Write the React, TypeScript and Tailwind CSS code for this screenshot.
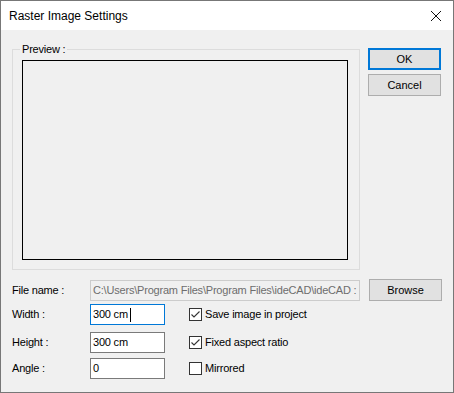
import React from "react";

const font = { fontFamily: '"Liberation Sans", Arial, sans-serif' };

function CheckBox({ checked, label }: { checked: boolean; label: string }) {
  return (
    <div className="flex items-center h-[21px]">
      <span className="w-[13px] h-[13px] border border-[#333333] bg-white flex items-center justify-center shrink-0">
        {checked && (
          <svg width="11" height="11" viewBox="0 0 11 11">
            <path d="M1.5 5.5 L4 8 L9.5 2.5" fill="none" stroke="#333333" strokeWidth="1.1" />
          </svg>
        )}
      </span>
      <span className="ml-[3px] text-[11px] tracking-[-0.2px] text-black leading-none">{label}</span>
    </div>
  );
}

function FormRow({
  label,
  value,
  focused,
  className = "",
  children,
}: {
  label: string;
  value: string;
  focused?: boolean;
  className?: string;
  children?: React.ReactNode;
}) {
  return (
    <div className={`flex items-center h-[21px] ${className}`}>
      <span className="w-[78px] text-[11px] tracking-[-0.2px] text-black leading-none">{label}</span>
      <div
        className={`w-[75px] h-[21px] bg-white flex items-center px-[2px] text-[11px] tracking-[-0.2px] text-black leading-none border ${
          focused ? "border-[#0078d7]" : "border-[#7a7a7a]"
        }`}
      >
        {value}
        {focused && <span className="inline-block w-[1px] h-[14px] bg-black ml-[2px]" />}
      </div>
      <div className="ml-[24px]">{children}</div>
    </div>
  );
}

export default function App() {
  return (
    <div className="w-[454px] h-[393px] border border-[#777777] flex flex-col bg-[#f0f0f0]" style={font}>
      <div className="h-[29px] bg-white flex items-center justify-between pl-[8px] pr-[11px] shrink-0">
        <span className="text-[12px] text-black">Raster Image Settings</span>
        <svg width="12" height="12" viewBox="0 0 12 12">
          <path d="M1 1 L11 11 M11 1 L1 11" stroke="#111111" strokeWidth="1" />
        </svg>
      </div>

      <div className="flex-1 pl-[11px]">
        <div className="flex items-start pt-[18px]">
          <div className="relative mt-[1px] w-[348px] h-[221px] border border-[#dcdcdc] pt-[10px] pl-[9px]">
            <span className="absolute left-[7px] top-[-8px] px-[2px] bg-[#f0f0f0] text-[11px] tracking-[-0.2px] leading-[14px] text-black">
              Preview :
            </span>
            <div className="w-[326px] h-[200px] border border-black" />
          </div>
          <div className="ml-[8px] flex flex-col gap-[4px]">
            <button className="w-[73px] h-[22px] border-2 border-[#0078d7] bg-[#e1e1e1] text-[11px] text-black leading-none">
              OK
            </button>
            <button className="w-[73px] h-[22px] border border-[#adadad] bg-[#e1e1e1] text-[11px] text-black leading-none">
              Cancel
            </button>
          </div>
        </div>

        <div className="flex items-center mt-[9px] h-[22px]">
          <span className="w-[78px] text-[11px] tracking-[-0.2px] text-black leading-none">File name :</span>
          <div className="w-[270px] h-[21px] border border-[#cccccc] bg-[#f0f0f0] flex items-center px-[2px] overflow-hidden whitespace-nowrap text-[11px] tracking-[-0.2px] text-[#6d6d6d] leading-none">
            C:\Users\Program Files\Program Files\ideCAD\ideCAD :
          </div>
          <button className="ml-[9px] w-[73px] h-[22px] border border-[#adadad] bg-[#e1e1e1] text-[11px] text-black leading-none">
            Browse
          </button>
        </div>

        <FormRow label="Width :" value="300 cm" focused className="mt-[3px]">
          <CheckBox checked label="Save image in project" />
        </FormRow>
        <FormRow label="Height :" value="300 cm" className="mt-[7px]">
          <CheckBox checked label="Fixed aspect ratio" />
        </FormRow>
        <FormRow label="Angle :" value="0" className="mt-[5px]">
          <CheckBox checked={false} label="Mirrored" />
        </FormRow>
      </div>
    </div>
  );
}
